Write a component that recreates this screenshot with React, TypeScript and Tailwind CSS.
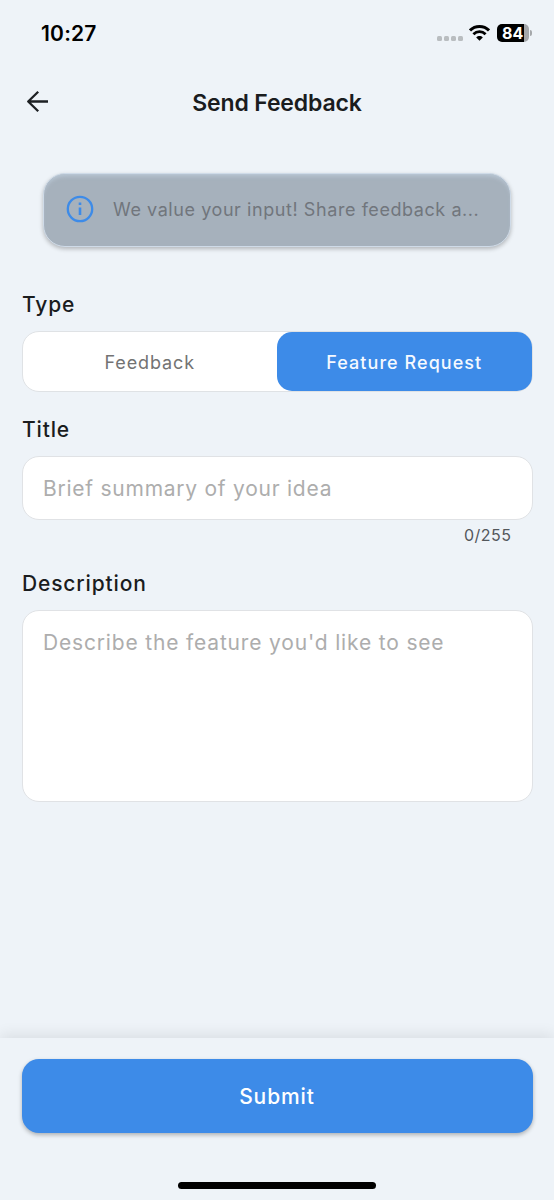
import type { ReactNode } from 'react';

function StatusBar() {
  return (
    <div className="flex h-[68px] shrink-0 items-start justify-between pl-[41px] pr-[22px]">
      <span className="mt-[20px] text-[21px] font-semibold leading-[27px] tracking-[0.2px] text-black">10:27</span>
      <div className="mt-[24px] flex h-[18px] items-center">
        <div className="mr-[6px] mt-[11px] flex gap-[2px]">
          {[0, 1, 2, 3].map((dot) => (
            <i key={dot} className="size-[5px] rounded-[1.5px] bg-[#b9bdc0]" />
          ))}
        </div>
        <svg className="mr-[7px] h-[16px] w-[21px]" viewBox="0 0 21 16" fill="none" stroke="#000">
          <path d="M1 5.4C6.3 0.2 14.7 0.2 20 5.4" strokeWidth="3" />
          <path d="M4.4 9.2C7.9 5.8 13.1 5.8 16.6 9.2" strokeWidth="2.8" />
          <path d="M7.2 12.4C9 10.6 12 10.6 13.8 12.4L10.5 15.8Z" fill="#000" stroke="none" />
        </svg>
        <div className="flex h-[18px] w-[32px] items-center overflow-hidden rounded-[5px] bg-[linear-gradient(90deg,#000_0_27px,#a5a8ab_27px)] pl-[5px] text-[16px] font-bold leading-[18px] tracking-[0.2px] text-white">84</div>
        <i className="ml-[1px] h-[6px] w-[2px] rounded-r-full bg-[#a5a8ab]" />
      </div>
    </div>
  );
}

function Label({ children }: { children: ReactNode }) {
  return <h2 className="pl-[0.5px] text-[21px] font-medium leading-[30px] tracking-[0.85px] text-[#1a1c1e]">{children}</h2>;
}

export default function App() {
  return (
    <main className="flex h-[1200px] w-[554px] flex-col overflow-hidden bg-[#eef3f8] font-['Inter','Liberation_Sans',sans-serif]">
      <StatusBar />
      <header className="grid h-[68px] shrink-0 grid-cols-[60px_1fr_60px] items-center">
        <svg className="mb-px ml-[26px] size-[23px]" viewBox="0 0 23 23" fill="none" stroke="#1d2023" strokeWidth="2.3" strokeLinejoin="round">
          <path d="M22 11.5H2.2M12.2 1.7L2.2 11.5L12.2 21.3" />
        </svg>
        <h1 className="text-center text-[23px] font-semibold leading-[32px] tracking-[-0.15px] text-[#1a1c1e] pt-px">Send Feedback</h1>
      </header>

      <section className="flex flex-1 flex-col px-[21.5px] pt-[37px]">
        <div className="mx-[21.5px] flex h-[74px] shrink-0 items-center rounded-[22px] border border-[#cfdbe8] bg-[#a6b1bc] pb-[2px] pl-[22px] shadow-[0_2px_4px_rgba(0,0,0,0.25),inset_0_4px_4px_-2px_rgba(200,216,234,0.6)]">
          <svg className="size-[28px] shrink-0" viewBox="0 0 28 28" fill="none" stroke="#3d8be8">
            <circle cx="14" cy="14" r="12.2" strokeWidth="2.3" />
            <path d="M14 12.5V20M14 7.5V10" strokeWidth="2.6" />
          </svg>
          <p className="ml-[19px] whitespace-nowrap pt-[2px] text-[18px] leading-[28px] tracking-[0.57px] text-[#71767c]">We value your input! Share feedback a...</p>
        </div>

        <div className="mt-[43px]"><Label>Type</Label></div>
        <div className="mt-[11px] grid h-[61px] w-[511px] shrink-0 grid-cols-2 rounded-[17px] border border-[#dfe2e5] bg-white text-[18px] tracking-[0.9px]">
          <button className="pt-px text-[#737373]">Feedback</button>
          <button className="rounded-[15px] bg-[#3d8be8] pt-px font-medium tracking-[1.05px] text-[#f5f9ff]">Feature Request</button>
        </div>

        <div className="mt-[23px]"><Label>Title</Label></div>
        <div className="mt-[11px] flex h-[64px] w-[511px] shrink-0 items-center rounded-[17px] border-[1.5px] border-[#e0e2e5] bg-white px-[20.5px] pt-[2px] text-[21px] tracking-[0.75px] text-[#adadad]">Brief summary of your idea</div>
        <div className="mt-[4px] pr-[21px] text-right text-[16px] leading-[22px] tracking-[0.5px] text-[#53575c]">0/255</div>

        <div className="mt-[23px]"><Label>Description</Label></div>
        <div className="mt-[11px] h-[192px] w-[511px] shrink-0 rounded-[17px] border-[1.5px] border-[#e0e2e5] bg-white px-[20.5px] pt-[17px] text-[21px] leading-[30px] tracking-[0.83px] text-[#adadad]">Describe the feature you'd like to see</div>
      </section>

      <footer className="flex h-[162px] shrink-0 flex-col items-center bg-[#eef3f8] pt-[21px] shadow-[0_-3px_14px_rgba(0,0,0,0.09)]">
        <button className="h-[74px] w-[511px] shrink-0 rounded-[17px] bg-[#3d8be8] pt-[2px] text-[21px] font-medium tracking-[0.9px] text-white shadow-[0_2px_4px_rgba(0,0,0,0.28)]">Submit</button>
        <i className="mt-[49px] h-[7px] w-[198px] rounded-full bg-black" />
      </footer>
    </main>
  );
}
